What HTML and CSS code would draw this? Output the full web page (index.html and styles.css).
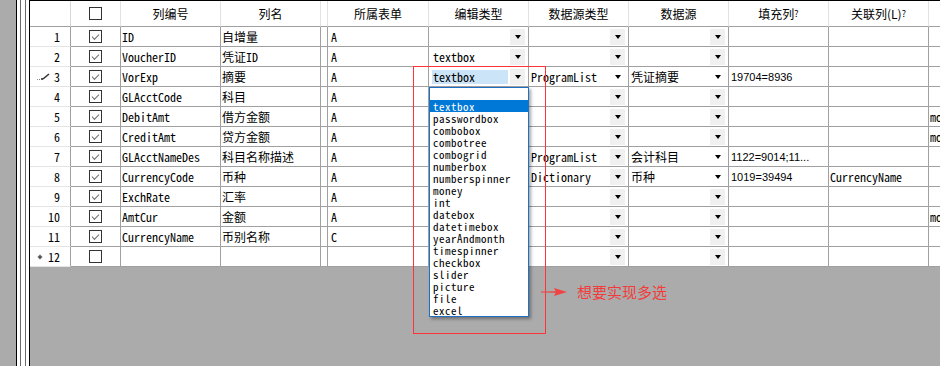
FILE: index.html
```html
<!DOCTYPE html>
<html lang="zh-CN">

<head>
    <meta charset="UTF-8">
    <title>列设置</title>
    <link rel="stylesheet" href="styles.css">
</head>

<body>
    <div class="window">
        <div class="side"></div>
        <div class="frame"></div>
        <div class="view">
            <div class="sheet">
                <div class="row head">
                    <div class="rh"></div>
                    <div class="ck"><span class="box"></span></div>
                    <div>列编号</div>
                    <div>列名</div>
                    <div></div>
                    <div>所属表单</div>
                    <div>编辑类型</div>
                    <div>数据源类型</div>
                    <div>数据源</div>
                    <div>填充列<small>?</small></div>
                    <div>关联列(L)<small>?</small></div>
                    <div></div>
                </div>
                <div class="row">
                    <div class="rh"><span class="no">1</span></div>
                    <div class="ck"><span class="box checked"></span></div>
                    <div>ID</div>
                    <div>自增量</div>
                    <div></div>
                    <div class="form">A</div>
                    <div class="combo edit"><span></span><span class="btn"></span></div>
                    <div class="combo"><span></span><span class="btn"></span></div>
                    <div class="combo"><span></span><span class="btn"></span></div>
                    <div></div>
                    <div></div>
                    <div></div>
                </div>
                <div class="row">
                    <div class="rh"><span class="no">2</span></div>
                    <div class="ck"><span class="box checked"></span></div>
                    <div>VoucherID</div>
                    <div>凭证ID</div>
                    <div></div>
                    <div class="form">A</div>
                    <div class="combo edit"><span>textbox</span><span class="btn"></span></div>
                    <div class="combo"><span></span><span class="btn"></span></div>
                    <div class="combo"><span></span><span class="btn"></span></div>
                    <div></div>
                    <div></div>
                    <div></div>
                </div>
                <div class="row">
                    <div class="rh">
                        <svg class="pen" width="14" height="8" viewBox="0 0 14 8">
                            <rect x="0" y="6" width="1" height="1" fill="#999"/>
                            <rect x="2" y="6" width="1" height="1" fill="#777"/>
                            <rect x="4" y="5" width="2" height="2" fill="#555"/>
                            <path d="M6 6 L12 1" stroke="#333" stroke-width="1.6" fill="none"/>
                        </svg>
                        <span class="no">3</span>
                    </div>
                    <div class="ck"><span class="box checked"></span></div>
                    <div>VorExp</div>
                    <div>摘要</div>
                    <div></div>
                    <div class="form">A</div>
                    <div class="combo editing"><span class="editor">textbox</span><span class="btn"></span></div>
                    <div class="combo"><span>ProgramList</span><span class="btn plain"></span></div>
                    <div class="combo"><span>凭证摘要</span><span class="btn plain"></span></div>
                    <div class="num">19704=8936</div>
                    <div></div>
                    <div></div>
                </div>
                <div class="row">
                    <div class="rh"><span class="no">4</span></div>
                    <div class="ck"><span class="box checked"></span></div>
                    <div>GLAcctCode</div>
                    <div>科目</div>
                    <div></div>
                    <div class="form">A</div>
                    <div class="combo edit"><span></span><span class="btn"></span></div>
                    <div class="combo"><span></span><span class="btn"></span></div>
                    <div class="combo"><span></span><span class="btn"></span></div>
                    <div></div>
                    <div></div>
                    <div></div>
                </div>
                <div class="row">
                    <div class="rh"><span class="no">5</span></div>
                    <div class="ck"><span class="box checked"></span></div>
                    <div>DebitAmt</div>
                    <div>借方金额</div>
                    <div></div>
                    <div class="form">A</div>
                    <div class="combo edit"><span></span><span class="btn"></span></div>
                    <div class="combo"><span></span><span class="btn"></span></div>
                    <div class="combo"><span></span><span class="btn"></span></div>
                    <div></div>
                    <div></div>
                    <div class="last">money</div>
                </div>
                <div class="row">
                    <div class="rh"><span class="no">6</span></div>
                    <div class="ck"><span class="box checked"></span></div>
                    <div>CreditAmt</div>
                    <div>贷方金额</div>
                    <div></div>
                    <div class="form">A</div>
                    <div class="combo edit"><span></span><span class="btn"></span></div>
                    <div class="combo"><span></span><span class="btn"></span></div>
                    <div class="combo"><span></span><span class="btn"></span></div>
                    <div></div>
                    <div></div>
                    <div class="last">money</div>
                </div>
                <div class="row">
                    <div class="rh"><span class="no">7</span></div>
                    <div class="ck"><span class="box checked"></span></div>
                    <div>GLAcctNameDes</div>
                    <div>科目名称描述</div>
                    <div></div>
                    <div class="form">A</div>
                    <div class="combo edit"><span></span><span class="btn"></span></div>
                    <div class="combo"><span>ProgramList</span><span class="btn"></span></div>
                    <div class="combo"><span>会计科目</span><span class="btn plain"></span></div>
                    <div class="num">1122=9014;11...</div>
                    <div></div>
                    <div></div>
                </div>
                <div class="row">
                    <div class="rh"><span class="no">8</span></div>
                    <div class="ck"><span class="box checked"></span></div>
                    <div>CurrencyCode</div>
                    <div>币种</div>
                    <div></div>
                    <div class="form">A</div>
                    <div class="combo edit"><span></span><span class="btn"></span></div>
                    <div class="combo"><span>Dictionary</span><span class="btn"></span></div>
                    <div class="combo"><span>币种</span><span class="btn plain"></span></div>
                    <div class="num">1019=39494</div>
                    <div>CurrencyName</div>
                    <div></div>
                </div>
                <div class="row">
                    <div class="rh"><span class="no">9</span></div>
                    <div class="ck"><span class="box checked"></span></div>
                    <div>ExchRate</div>
                    <div>汇率</div>
                    <div></div>
                    <div class="form">A</div>
                    <div class="combo edit"><span></span><span class="btn"></span></div>
                    <div class="combo"><span></span><span class="btn"></span></div>
                    <div class="combo"><span></span><span class="btn"></span></div>
                    <div></div>
                    <div></div>
                    <div></div>
                </div>
                <div class="row">
                    <div class="rh"><span class="no">10</span></div>
                    <div class="ck"><span class="box checked"></span></div>
                    <div>AmtCur</div>
                    <div>金额</div>
                    <div></div>
                    <div class="form">A</div>
                    <div class="combo edit"><span></span><span class="btn"></span></div>
                    <div class="combo"><span></span><span class="btn"></span></div>
                    <div class="combo"><span></span><span class="btn"></span></div>
                    <div></div>
                    <div></div>
                    <div class="last">money</div>
                </div>
                <div class="row">
                    <div class="rh"><span class="no">11</span></div>
                    <div class="ck"><span class="box checked"></span></div>
                    <div>CurrencyName</div>
                    <div>币别名称</div>
                    <div></div>
                    <div class="form">C</div>
                    <div class="combo edit"><span></span><span class="btn"></span></div>
                    <div class="combo"><span></span><span class="btn"></span></div>
                    <div class="combo"><span></span><span class="btn"></span></div>
                    <div></div>
                    <div></div>
                    <div></div>
                </div>
                <div class="row">
                    <div class="rh">
                        <svg class="star" width="6" height="6" viewBox="0 0 6 6">
                            <path d="M3 0 L3.8 2.2 L6 3 L3.8 3.8 L3 6 L2.2 3.8 L0 3 L2.2 2.2 Z" fill="#666"/>
                            <circle cx="3" cy="3" r="1.8" fill="#555"/>
                        </svg>
                        <span class="no">12</span>
                    </div>
                    <div class="ck"><span class="box"></span></div>
                    <div></div>
                    <div></div>
                    <div></div>
                    <div></div>
                    <div class="combo edit"><span></span><span class="btn"></span></div>
                    <div class="combo"><span></span><span class="btn"></span></div>
                    <div class="combo"><span></span><span class="btn"></span></div>
                    <div></div>
                    <div></div>
                    <div></div>
                </div>
            </div>

            <ul class="list">
                <li></li>
                <li class="on">textbox</li>
                <li>passwordbox</li>
                <li>combobox</li>
                <li>combotree</li>
                <li>combogrid</li>
                <li>numberbox</li>
                <li>numberspinner</li>
                <li>money</li>
                <li>int</li>
                <li>datebox</li>
                <li>datetimebox</li>
                <li>yearAndmonth</li>
                <li>timespinner</li>
                <li>checkbox</li>
                <li>slider</li>
                <li>picture</li>
                <li>file</li>
                <li>excel</li>
            </ul>

            <div class="mark"></div>
            <div class="note">
                <svg width="27" height="10" viewBox="0 0 27 10">
                    <path d="M0 4.6 L15 4.2 L15 5.8 L0 5.4 Z" fill="#f04444"/>
                    <path d="M13 1 L26 5 L13 9 L15 5 Z" fill="#f04444"/>
                </svg>
                <span>想要实现多选</span>
            </div>
        </div>
    </div>
</body>

</html>
```

FILE: styles.css
```css
html,body,div,ul,li,span,small{margin:0;padding:0;}
li{list-style:none;}
body{width:940px;height:366px;overflow:hidden;background:#ababab;color:#000;font:12px "Noto Sans Mono CJK SC","Liberation Mono","Noto Sans CJK SC",monospace;}
.window{display:flex;height:366px;}
.side{width:16px;flex-shrink:0;background:#ababab;}
.frame{width:13px;flex-shrink:0;background:linear-gradient(to right,#000 0 1px,#fff 1px 4px,#6a6a6a 4px 5px,#fff 5px 9px,#6a6a6a 9px 10px,#fff 10px 13px);}
.view{flex:1;position:relative;overflow:hidden;border-left:1px solid #000;border-top:1px solid #000;background:#ababab;}

/* grid */
.sheet{width:999px;}
.row{display:grid;grid-template-columns:41px 50px 100px 100px 7px 101px 100px 100px 100px 100px 100px 100px;height:20px;background:#fff;}
.row>div{display:flex;align-items:center;padding-left:1px;border-right:1px solid #a0a0a0;border-bottom:1px solid #a0a0a0;white-space:nowrap;overflow:hidden;}
.head{height:26px;}
.head>div{justify-content:center;padding-left:0;border-right-color:#e2e2e2;font-family:"Noto Sans CJK SC",sans-serif;}
.head small{font-size:9px;}
.row>.rh{padding:0 10px 0 7px;border-right-color:#a0a0a0;border-bottom-color:#e4e4e4;}
.head>.rh{border-bottom-color:#a0a0a0;border-right-color:#d8d8d8;}
.rh .no{margin-left:auto;}
.row>.ck{justify-content:center;padding-left:0;}
.box{width:11px;height:11px;border:1px solid #333;background:#fff;position:relative;}
.box.checked::after{content:"";position:absolute;left:2px;top:1px;width:6px;height:3px;border-left:1px solid #6e6e6e;border-bottom:1px solid #6e6e6e;transform:translate(0,2px) rotate(-45deg);}
.row>.form{padding-left:3px;}
.row>.num{padding-left:2px;font:11px "Liberation Sans",sans-serif;}
.row>.last{padding-left:1px;}

/* combo cells */
.row>.combo{justify-content:space-between;padding-left:2px;}
.row>.edit{padding-left:4px;}
.btn{width:15px;height:16px;margin-right:3px;background:#f0f0f0;display:flex;align-items:center;justify-content:center;flex-shrink:0;}
.btn::after{content:"";border-left:3px solid transparent;border-right:3px solid transparent;border-top:4px solid #000;}
.btn.plain{background:none;}
.row>.editing{padding-left:3px;}
.editor{flex:1;height:14px;line-height:14px;padding-left:1px;margin-right:2px;background:#cce4f7;}

/* dropdown */
.list{position:absolute;left:399px;top:86px;width:98px;border:1px solid #1f6fc5;background:#fff;box-shadow:2px 2px 3px rgba(0,0,0,0.35);font-size:11px;letter-spacing:0.5px;}
.list li{height:12px;line-height:12px;padding-left:3px;white-space:nowrap;}
.list .on{background:#0078d7;color:#fff;}

/* annotation */
.mark{position:absolute;left:383px;top:65px;width:131px;height:266px;border:1px solid #f33;}
.note{position:absolute;left:511px;top:282px;display:flex;align-items:center;gap:9px;color:#f23c3c;font:15px/18px "Noto Sans CJK SC",sans-serif;}
```
